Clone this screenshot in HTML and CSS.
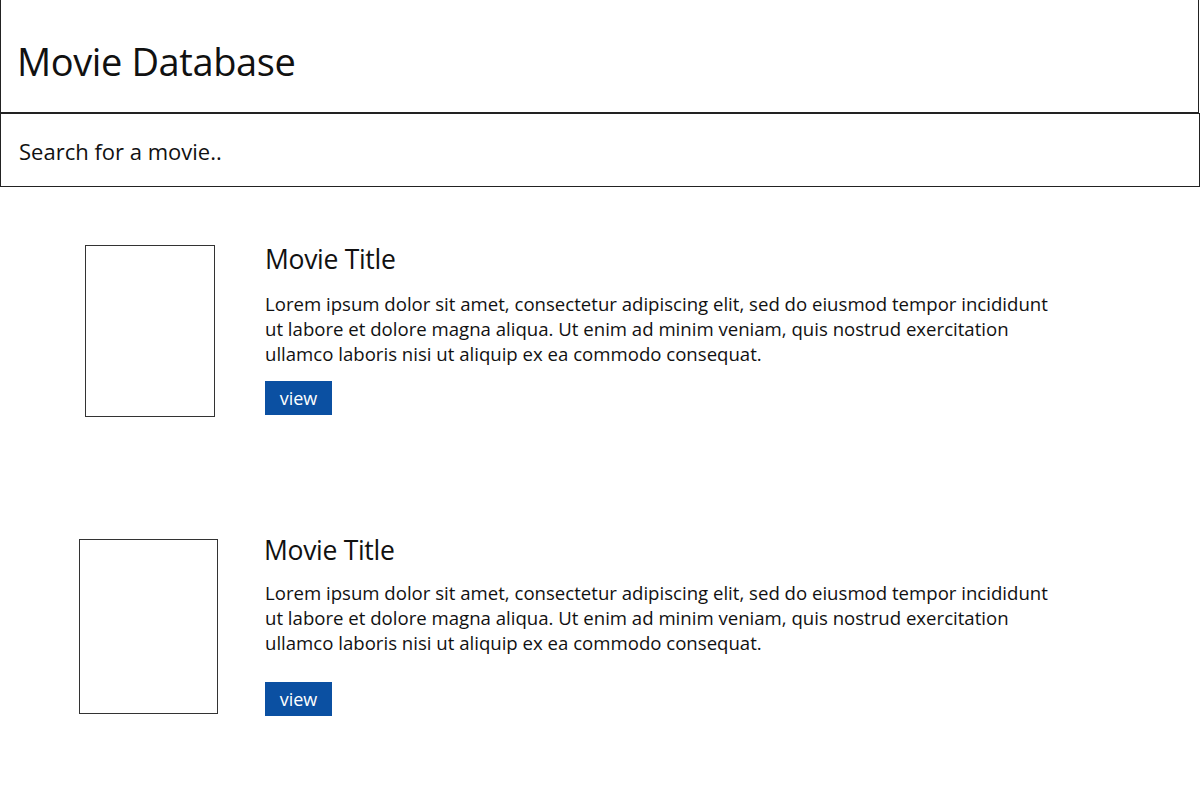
FILE: index.html
```html
<!DOCTYPE html>
<html lang="en">
<head>
<meta charset="utf-8">
<title>Movie Database</title>
<link rel="stylesheet" href="styles.css">
</head>
<body>
<header class="site-header">
  <h1 class="site-title">Movie Database</h1>
</header>
<div class="search">Search for a movie..</div>
<main class="results">
  <article class="movie movie--first">
    <div class="poster-cell"><div class="poster poster--a"></div></div>
    <div class="movie-body">
      <h2 class="movie-title">Movie Title</h2>
      <p class="movie-text">Lorem ipsum dolor sit amet, consectetur adipiscing elit, sed do eiusmod tempor incididunt<br>ut labore et dolore magna aliqua. Ut enim ad minim veniam, quis nostrud exercitation<br>ullamco laboris nisi ut aliquip ex ea commodo consequat.</p>
      <a class="view-btn" href="#">view</a>
    </div>
  </article>
  <article class="movie movie--second">
    <div class="poster-cell"><div class="poster poster--b"></div></div>
    <div class="movie-body">
      <h2 class="movie-title">Movie Title</h2>
      <p class="movie-text">Lorem ipsum dolor sit amet, consectetur adipiscing elit, sed do eiusmod tempor incididunt<br>ut labore et dolore magna aliqua. Ut enim ad minim veniam, quis nostrud exercitation<br>ullamco laboris nisi ut aliquip ex ea commodo consequat.</p>
      <a class="view-btn view-btn--low" href="#">view</a>
    </div>
  </article>
</main>
</body>
</html>
```
FILE: styles.css
```css
* { box-sizing: border-box; }
html, body { margin: 0; padding: 0; background: #fff; }
body {
  font-family: "Open Sans", "Noto Sans", sans-serif;
  color: #111;
  width: 1200px;
}
.site-header {
  height: 113px;
  border-left: 1px solid #222;
  border-right: 1px solid #222;
  border-bottom: 1px solid #222;
  padding: 38px 0 0 16px;
  margin-right: 1px;
}
.site-title {
  margin: 0;
  font-weight: 400;
  font-size: 38px;
  line-height: 46px;
  letter-spacing: -0.4px;
}
.search {
  height: 74px;
  border: 1px solid #222;
  padding: 22px 0 0 18px;
  font-size: 22px;
  line-height: 30px;
}
.results {
  padding-top: 57px;
}
.movie {
  display: flex;
}
.poster-cell {
  width: 265px;
  flex: none;
}
.poster {
  border: 1px solid #333;
  background: #fff;
}
.poster--a {
  margin: 1px 0 0 85px;
  width: 130px;
  height: 172px;
}
.poster--b {
  margin: 4px 0 0 79px;
  width: 139px;
  height: 175px;
}
.movie--second {
  margin-top: 118px;
}
.movie--second .movie-title { margin-left: -1px; }
.movie--second .movie-text { margin-top: 15px; }
.movie-title {
  margin: 0;
  font-weight: 400;
  font-size: 26.5px;
  line-height: 30px;
  letter-spacing: -0.3px;
}
.movie-text {
  margin: 17px 0 0;
  font-size: 18.6px;
  line-height: 25px;
}
.view-btn {
  display: inline-block;
  margin-top: 15px;
  height: 34px;
  width: 67px;
  text-align: center;
  background: #0b50a2;
  color: #fff;
  text-decoration: none;
  font-size: 18px;
  line-height: 34px;
}
.view-btn--low { margin-top: 27px; }
```
